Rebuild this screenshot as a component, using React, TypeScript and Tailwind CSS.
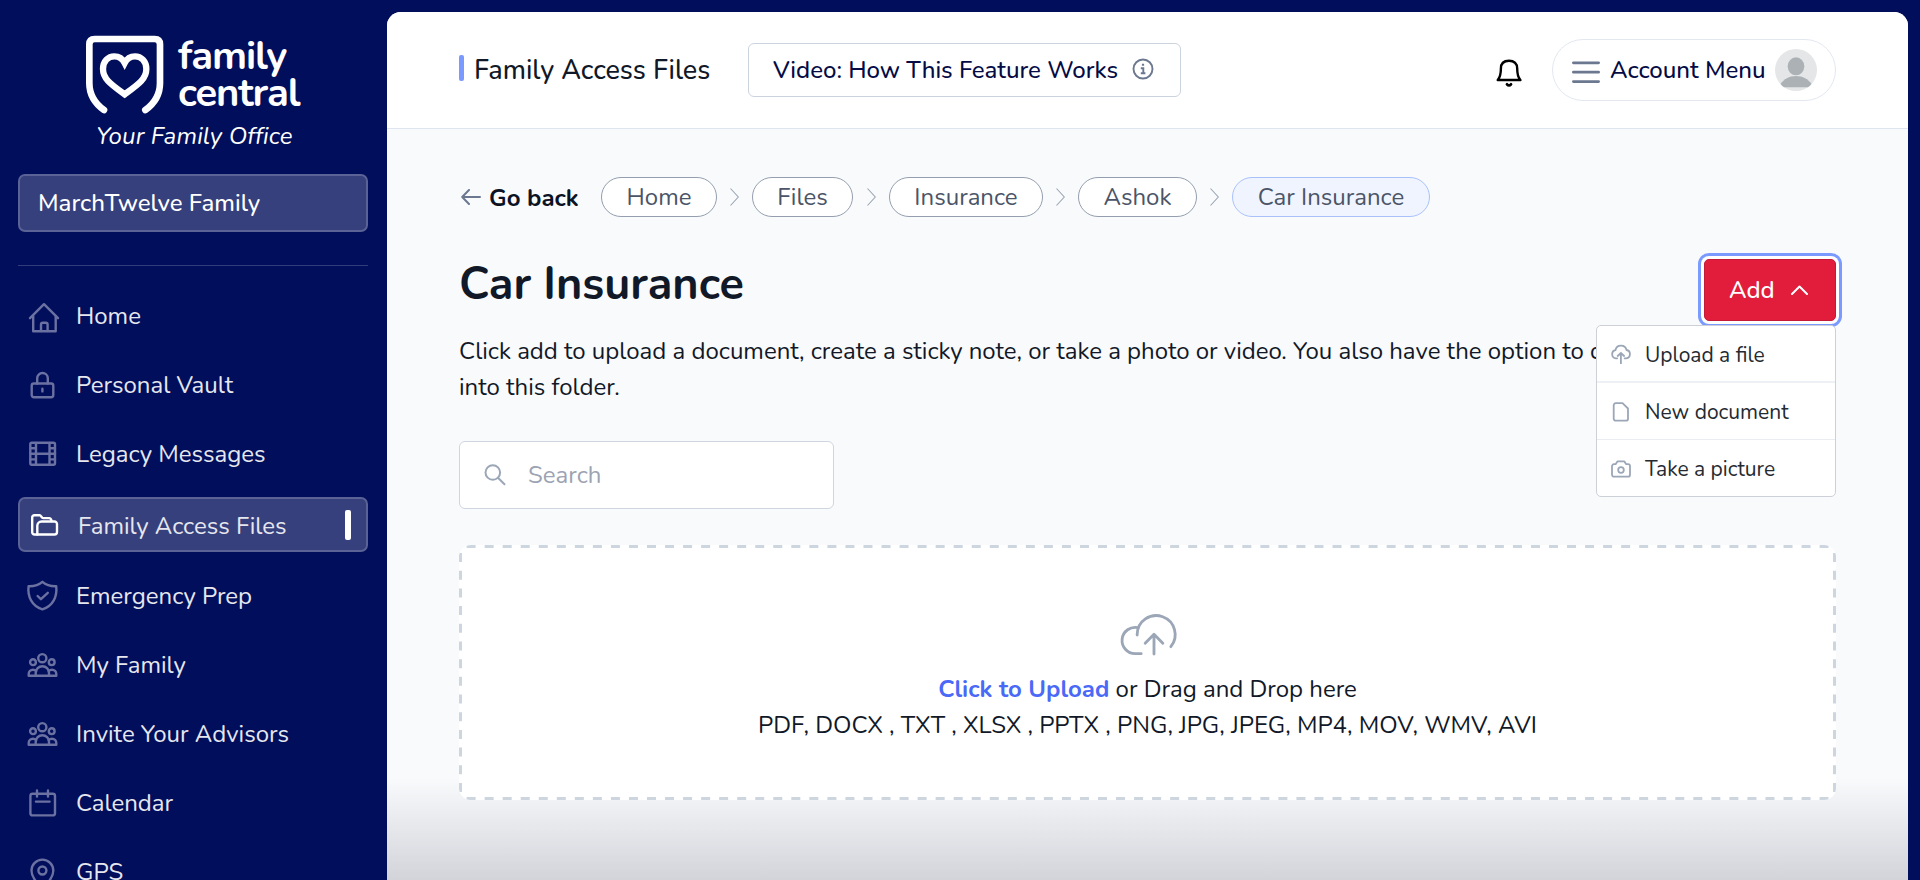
import type { ReactNode } from "react";

function Icon({ children }: { children: ReactNode }) {
  return (
    <svg
      className="size-9 shrink-0"
      viewBox="0 0 36 36"
      fill="none"
      stroke="currentColor"
      strokeWidth="2.4"
      strokeLinecap="round"
      strokeLinejoin="round"
    >
      {children}
    </svg>
  );
}

const people = (
  <>
    <circle cx="17.3" cy="12.2" r="4.1" />
    <circle cx="8" cy="16.2" r="2.9" />
    <circle cx="26.7" cy="16.2" r="2.9" />
    <path d="M10.7 29.8v-2.9a6.65 6.65 0 0 1 13.3 0v2.9" />
    <path d="M11.2 25c-1-1-2-1.3-3.2-1.3a4.3 4.3 0 0 0-4.3 4.3v1.8h27.6V28a4.3 4.3 0 0 0-4.3-4.3c-1.2 0-2.3.3-3.3 1.3" />
  </>
);

type Item = { label: string; icon: ReactNode; active?: boolean };

const items: Item[] = [
  {
    label: "Home",
    icon: (
      <>
        <path d="M5 21.2 19 7.2l14 14" />
        <path d="M8.2 19v15.3h22.5V19" />
        <path d="M16 34v-6.5a1.8 1.8 0 0 1 1.8-1.8h3a1.8 1.8 0 0 1 1.8 1.8V34" />
      </>
    ),
  },
  {
    label: "Personal Vault",
    icon: (
      <>
        <rect x="6.7" y="17.5" width="21.6" height="13.7" rx="2.2" />
        <path d="M12.2 17.5v-5.2a5.3 5.3 0 0 1 10.6 0v5.2M17.4 22.8v2.6" />
      </>
    ),
  },
  {
    label: "Legacy Messages",
    icon: (
      <>
        <rect x="5.3" y="7.8" width="24.7" height="22" rx="1.5" />
        <path d="M11 8v21.5M24.5 8v21.5M11 18.8h13.5M5.5 13.2H11M5.5 18.8H11M5.5 24.4H11M24.5 13.2H30M24.5 18.8H30M24.5 24.4H30" />
      </>
    ),
  },
  {
    label: "Family Access Files",
    active: true,
    icon: (
      <>
        <path d="M10.3 27.5H7.4A2.2 2.2 0 0 1 5.2 25.3V10.4A2.2 2.2 0 0 1 7.4 8.2h5.3c1.300 0 1.800 2.900 3.400 2.900h6c1.500 0 2.200 1.200 2.500 3" />
        <path d="M10.3 27.5v-8.800a4.200 4.200 0 0 1 4.200-4.200h13a2.500 2.500 0 0 1 2.500 2.500v8a2.500 2.500 0 0 1-2.500 2.500z" />
      </>
    ),
  },
  {
    label: "Emergency Prep",
    icon: (
      <>
        <path d="M17.4 4.800C13.500 8.200 9 9.400 3.600 9.200C2.300 19.500 6.800 29 17.400 32.400C28 29 32.500 19.500 31.200 9.200C25.800 9.400 21.300 8.200 17.400 4.800Z" />
        <path d="m12.6 19 3.300 3.200 6.900-6.400" />
      </>
    ),
  },
  { label: "My Family", icon: people },
  { label: "Invite Your Advisors", icon: people },
  {
    label: "Calendar",
    icon: (
      <>
        <rect x="5.4" y="9.7" width="24.6" height="21.7" rx="2.2" />
        <path d="M12 6.500v6M23 6.500v6M10.900 17.600h13.700" />
      </>
    ),
  },
  {
    label: "GPS",
    icon: (
      <>
        <path d="M17.4 35.500C11 29.500 6.500 24 6.500 17.500a10.900 10.900 0 0 1 21.800 0c0 6.500-4.500 12-10.900 18z" />
        <circle cx="17.4" cy="17.5" r="4" />
      </>
    ),
  },
];

function Sidebar() {
  return (
    <aside className="flex w-[387px] shrink-0 flex-col pl-[18px] pr-[19px] pt-[33px]">
      <div className="flex h-[86px] shrink-0 pl-[67px]">
        <svg
          className="h-[83px] w-20 shrink-0"
          viewBox="255 100 240 249"
          fill="none"
          stroke="white"
          strokeLinecap="round"
          strokeLinejoin="round"
        >
          <path
            strokeWidth="20"
            d="M312 331C284 311 268 283 268 250V134Q268 118 284 118H464Q480 118 480 134V250C480 283 464 311 436 331"
          />
          <path
            strokeWidth="19"
            strokeLinejoin="miter"
            d="M374 284C333 254 309 238 309 208C309 184 325 170 343 170C358 170 368 178 374 190C380 178 390 170 405 170C423 170 439 184 439 208C439 238 415 254 374 284Z"
          />
        </svg>
        <div className="flex flex-col pl-[13px] pt-[5px] text-[40px] font-bold leading-[37px] tracking-[-1.1px] text-white">
          <span>family</span>
          <span>central</span>
        </div>
      </div>
      <p className="shrink-0 pl-[78px] pt-px text-[24px] italic leading-8 tracking-[0.15px] text-white">
        Your Family Office
      </p>
      <div className="mt-[22px] flex h-[58px] shrink-0 items-center rounded-[7px] border-2 border-[#5a6296] bg-[#36407c] pl-[18px] text-2xl font-medium text-white">
        MarchTwelve Family
      </div>
      <div className="mt-[33px] h-px shrink-0 bg-[#333c7b]" />
      <nav className="mt-3.5 flex shrink-0 flex-col text-2xl text-[#e6e7ee]">
        {items.map((it) =>
          it.active ? (
            <a
              key={it.label}
              className="mb-2 mt-2.5 flex h-[55px] shrink-0 items-center rounded-[7px] border-2 border-[#5a6296] bg-[#36407c] pl-[7px] pr-[15px]"
            >
              <span className="flex text-white">
                <Icon>{it.icon}</Icon>
              </span>
              <span className="pl-[15px] pt-0.5">{it.label}</span>
              <span className="ml-auto h-[30px] w-1.5 rounded-[2px] bg-white" />
            </a>
          ) : (
            <a key={it.label} className="flex h-[69px] shrink-0 items-center pl-[7px]">
              <span className="flex text-[#6b71a1]">
                <Icon>{it.icon}</Icon>
              </span>
              <span className="pl-[15px] pt-[3px]">{it.label}</span>
            </a>
          ),
        )}
      </nav>
    </aside>
  );
}

function Header() {
  return (
    <header className="flex h-[117px] shrink-0 items-center border-b border-[#dfe5ef] bg-white px-[72px] text-2xl font-medium text-[#040b45]">
      <span className="mb-1 h-[26px] w-[5px] rounded-[2px] bg-[#7b9aff]" />
      <h1 className="w-[284px] pl-2.5 pt-px text-[27px] text-[#111827]">Family Access Files</h1>
      <button className="flex h-[54px] w-[433px] items-center rounded-[6px] border border-[#cbd3df] pl-6">
        <span className="w-[359px] text-left">Video: How This Feature Works</span>
        <svg
          className="-mt-0.5 size-[22px]"
          viewBox="0 0 22 22"
          fill="none"
          stroke="#6b7890"
          strokeWidth="1.9"
        >
          <circle cx="11" cy="11" r="9.5" />
          <path d="M8.800 10.200h2.500v5M8.800 15.300h4.600" />
          <path d="M11 5.700v2.100" strokeWidth="2.2" />
        </svg>
      </button>
      <svg
        className="ml-auto mr-[30px] mt-1.5 h-[30px] w-[26px]"
        viewBox="0 0 26 30"
        fill="none"
        stroke="black"
        strokeWidth="2.4"
        strokeLinejoin="round"
        strokeLinecap="round"
      >
        <path d="M1.700 22C4.500 19 4.900 16 4.900 10.500C4.900 5.500 8 2.700 13 2.700S21.200 5.500 21.200 10.500C21.200 16 21.600 19 24.400 22Z" />
        <path d="M11 26.300Q13 28.600 15 26.300" strokeWidth="2.8" />
      </svg>
      <button className="flex h-[62px] w-[284px] items-center rounded-full border border-[#e2e7f0] pl-[19px]">
        <svg className="mt-[3px] h-6 w-7" viewBox="0 0 28 24" stroke="#6b7890" strokeLinecap="round" strokeWidth="2.8">
          <path d="M1.400 2.800h25.200M1.400 12.200h25.200M1.400 21.600h25.200" />
        </svg>
        <span className="w-[175px] pl-2.5 text-left">Account Menu</span>
        <svg className="size-[42px]" viewBox="0 0 42 42">
          <circle cx="21" cy="21" r="21" fill="#e4e6e7" />
          <ellipse cx="21" cy="17.3" rx="8.3" ry="9" fill="#abb1b5" />
          <path d="M5.500 35C9 30 14 27 21 27S33 30 36.500 35Q34.500 37.500 33 38.200H9Q7.500 37.500 5.500 35Z" fill="#abb1b5" />
        </svg>
      </button>
    </header>
  );
}

function Chevron() {
  return (
    <svg
      className="mx-[13px] h-[18px] w-[9px] shrink-0"
      viewBox="0 0 9 18"
      fill="none"
      stroke="#9ba4b3"
      strokeWidth="1.1"
    >
      <path d="M.5.500 8.300 9 .5 17.500" />
    </svg>
  );
}

const pill = "flex h-10 items-center justify-center rounded-full border border-[#949eae] bg-white";

function Breadcrumbs() {
  return (
    <div className="flex h-10 shrink-0 items-center text-2xl text-[#4b5567]">
      <svg
        className="ml-0.5 h-4 w-5"
        viewBox="0 0 20 16"
        fill="none"
        stroke="#6b7890"
        strokeWidth="2"
        strokeLinecap="round"
        strokeLinejoin="round"
      >
        <path d="M19 8H1.200M8 1 1.200 8 8 15" />
      </svg>
      <span className="w-[120px] pl-2 pt-0.5 font-bold text-[#0b1222]">Go back</span>
      <span className={`${pill} w-[116px]`}>Home</span>
      <Chevron />
      <span className={`${pill} mr-px w-[101px]`}>Files</span>
      <Chevron />
      <span className={`${pill} w-[154px]`}>Insurance</span>
      <Chevron />
      <span className={`${pill} w-[119px]`}>Ashok</span>
      <Chevron />
      <span className="flex h-10 w-[198px] items-center justify-center rounded-full border border-[#a9c1fb] bg-[#f0f4ff]">
        Car Insurance
      </span>
    </div>
  );
}

const row = "flex items-center pl-3.5";

function AddMenu() {
  return (
    <div className="absolute right-0 top-[66px] z-10 flex h-[172px] w-60 flex-col rounded-[5px] border border-[#cdd1d7] bg-white text-[21px] text-[#252a31]">
      <div className={`${row} h-[57px] border-b-2 border-[#edf0f4]`}>
        <svg className="mr-3.5 size-5" viewBox="0 0 20 20" fill="none" stroke="#9ba6b7" strokeWidth="1.8" strokeLinecap="round" strokeLinejoin="round">
          <path d="M6.200 14.300H5A4.100 4.100 0 0 1 4.400 6.200A5.700 5.700 0 0 1 15.500 6A4.200 4.200 0 0 1 15.200 14.300H13.600M9.900 19.500V9.200M6.700 12l3.200-3 3.200 3" />
        </svg>
        <span className="pt-1">Upload a file</span>
      </div>
      <div className={`${row} h-[57px] border-b border-[#e9ecf0]`}>
        <svg className="mr-3.5 mt-0.5 size-5" viewBox="0 0 20 20" fill="none" stroke="#9ba6b7" strokeWidth="1.8" strokeLinecap="round" strokeLinejoin="round">
          <path d="M4.700 1.200H11.500L17 6.500V16.700A2 2 0 0 1 15 18.700H4.700A2 2 0 0 1 2.700 16.700V3.200A2 2 0 0 1 4.700 1.200Z" />
        </svg>
        <span className="pt-[3px]">New document</span>
      </div>
      <div className={`${row} h-14 pt-px`}>
        <svg className="mr-3.5 size-5" viewBox="0 0 20 20" fill="none" stroke="#9ba6b7" strokeWidth="1.8" strokeLinecap="round" strokeLinejoin="round">
          <path d="M3 5.200H4.600L6.400 2.400H13.400L15.200 5.200H17A2 2 0 0 1 19 7.200V15.700A2 2 0 0 1 17 17.700H3A2 2 0 0 1 1 15.700V7.200A2 2 0 0 1 3 5.200Z" />
          <circle cx="10" cy="11" r="2.8" />
        </svg>
        <span className="pt-0.5">Take a picture</span>
      </div>
    </div>
  );
}

function DropZone() {
  return (
    <div className="relative mt-9 flex h-[255px] shrink-0 flex-col items-center overflow-hidden rounded-[12px] bg-white pt-[46px] text-2xl leading-9 text-[#111827]">
      <svg
        className="pointer-events-none absolute inset-0 h-full w-full"
        viewBox="0 0 1377 255"
        fill="none"
        stroke="#cdd5df"
        strokeWidth="3"
      >
        <path strokeDasharray="9 9.040" d="M7.600 1.500H1369.500M7.600 253.500H1369.500" />
        <path strokeDasharray="9 8.690" d="M1.500 8V247M1375.500 8V247" />
      </svg>
      <svg
        className="h-20 w-[100px] shrink-0"
        viewBox="-7.5 0 300 240"
        fill="none"
        stroke="#9ba6b7"
        strokeWidth="8.5"
        strokeLinecap="round"
        strokeLinejoin="round"
      >
        <path d="M122 188H104A39.500 39.500 0 1 1 113 110" />
        <path d="M110 132V130A57 57 0 1 1 211 167" />
        <path d="M160.500 189V130M134 157 160.500 130 187 157" />
      </svg>
      <p>
        <span className="font-bold text-[#4a69f7]">Click to Upload</span> or Drag and Drop here
      </p>
      <p>PDF, DOCX , TXT , XLSX , PPTX , PNG, JPG, JPEG, MP4, MOV, WMV, AVI</p>
    </div>
  );
}

export default function App() {
  return (
    <div className="flex h-[880px] w-[1920px] overflow-hidden bg-[#010e5b] font-['Nunito','Lato',sans-serif]">
      <Sidebar />
      <main className="mr-3 mt-3 flex flex-1 flex-col overflow-hidden rounded-t-[14px] bg-white">
        <Header />
        <section className="flex flex-1 flex-col bg-[linear-gradient(to_bottom,#f9fafc_0px,#f9fafc_649px,#d3d4da_751px)] px-[72px] pt-12">
          <Breadcrumbs />
          <div className="mt-9 flex h-20 shrink-0 items-start justify-between">
            <h2 className="pt-1 text-[45px] font-bold leading-[56px] text-[#111827]">Car Insurance</h2>
            <div className="relative mt-1.5">
              <button className="flex h-[62px] w-[132px] items-center rounded-[5px] border border-[#c51a37] bg-[#e11d3b] pl-6 text-2xl font-medium text-white ring-3 ring-[#7b9aff] ring-offset-3 ring-offset-white">
                Add
                <svg className="ml-4 h-2.5 w-[17px]" viewBox="0 0 17 10" fill="none" stroke="white" strokeWidth="2" strokeLinecap="round" strokeLinejoin="round">
                  <path d="M1 9 8.500 1.500 16 9" />
                </svg>
              </button>
              <AddMenu />
            </div>
          </div>
          <p className="text-2xl leading-9 text-[#111827]">
            Click add to upload a document, create a sticky note, or take a photo or video. You also have the
            option to drag and drop files
            <br />
            into this folder.
          </p>
          <div className="mt-9 flex h-[68px] w-[375px] shrink-0 items-center rounded-[6px] border border-[#cfd6e0] bg-white pl-6 text-2xl text-[#9ca3b2]">
            <svg className="mr-[22px] size-[22px]" viewBox="0 0 22 22" fill="none" stroke="#9ba6b7" strokeWidth="2" strokeLinecap="round">
              <circle cx="8.8" cy="8.5" r="7.3" />
              <path d="m14.200 14 6.300 6.300" />
            </svg>
            <span>Search</span>
          </div>
          <DropZone />
        </section>
      </main>
    </div>
  );
}
